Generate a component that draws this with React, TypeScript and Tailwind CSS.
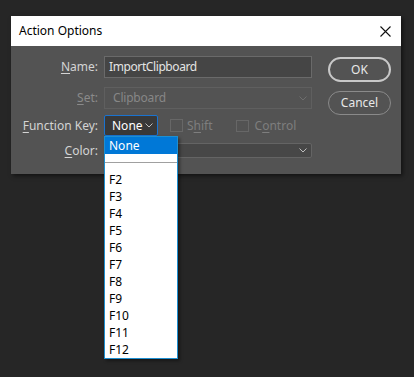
import React from "react";

const font = { fontFamily: '"Noto Sans", "Open Sans", sans-serif' };

const Chevron: React.FC<{ color: string }> = ({ color }) => (
  <svg width="8" height="5" viewBox="0 0 8 5" fill="none">
    <path d="M0.5 0.5 L4 4 L7.5 0.5" stroke={color} strokeWidth="1" />
  </svg>
);

const Label: React.FC<{ u: string; rest: string; disabled?: boolean }> = ({
  u,
  rest,
  disabled,
}) => (
  <div
    className={`w-[87px] shrink-0 text-right text-[12px] leading-none ${
      disabled ? "text-[#8a8a8a]" : "text-[#d4d4d4]"
    }`}
  >
    <span className="underline underline-offset-2">{u}</span>
    {rest}
  </div>
);

const keys = ["F2", "F3", "F4", "F5", "F6", "F7", "F8", "F9", "F10", "F11", "F12"];

const App: React.FC = () => {
  return (
    <div className="w-[414px] h-[377px] bg-[#262626] overflow-hidden pt-[16px] pl-[11px]" style={font}>
      <div className="relative w-[390px] shadow-[2px_2px_4px_rgba(0,0,0,0.5)]">
        {/* title bar */}
        <div className="h-[30px] bg-white flex items-center justify-between pl-[8px] pr-[10px]">
          <span className="text-[12px] text-black">Action Options</span>
          <svg width="11" height="11" viewBox="0 0 11 11">
            <path d="M0.5 0.5 L10.5 10.5 M10.5 0.5 L0.5 10.5" stroke="#111" strokeWidth="1.1" />
          </svg>
        </div>

        {/* body */}
        <div className="h-[128px] bg-[#535353] flex pt-[10px] pr-[10px]">
          <div className="flex flex-col w-[301px]">
            {/* Name */}
            <div className="flex items-center h-[22px]">
              <Label u="N" rest="ame:" />
              <div className="ml-[6px] w-[208px] h-[22px] bg-[#454545] border border-[#6a6a6a] flex items-center pl-[4px] text-[12px] tracking-[-0.4px] text-[#e4e4e4]">
                ImportClipboard
              </div>
            </div>
            {/* Set */}
            <div className="flex items-center h-[22px] mt-[9px]">
              <Label u="S" rest="et:" disabled />
              <div className="ml-[6px] w-[208px] h-[22px] border border-[#5f5f5f] flex items-center justify-between pl-[8px] pr-[4px] text-[12px] tracking-[-0.2px] text-[#878787]">
                <span>Clipboard</span>
                <Chevron color="#6e6e6e" />
              </div>
            </div>
            {/* Function Key */}
            <div className="flex items-center h-[21px] mt-[6px]">
              <Label u="F" rest="unction Key:" />
              <div className="ml-[6px] w-[54px] h-[21px] bg-[#393939] border border-[#1a73d0] rounded-[2px] flex items-center justify-between pl-[7px] pr-[4px] text-[12px] text-white">
                <span>None</span>
                <Chevron color="#bdbdbd" />
              </div>
              <div className="ml-[12px] w-[13px] h-[13px] border border-[#676767]" />
              <span className="ml-[4px] text-[12px] text-[#7e7e7e]">
                S<span className="underline underline-offset-2">h</span>ift
              </span>
              <div className="ml-[23px] w-[13px] h-[12px] border border-[#676767]" />
              <span className="ml-[6px] text-[12px] text-[#7e7e7e]">
                C<span className="underline underline-offset-2">o</span>ntrol
              </span>
            </div>
            {/* Color */}
            <div className="flex items-center h-[15px] mt-[7px]">
              <Label u="C" rest="olor:" />
              <div className="ml-[6px] w-[208px] h-[15px] bg-[#474747] border border-[#646464] rounded-[2px] flex items-center justify-end pr-[4px]">
                <Chevron color="#bdbdbd" />
              </div>
            </div>
          </div>

          <div className="ml-[16px] flex flex-col pt-[1px]">
            <div className="w-[63px] h-[25px] rounded-full border-2 border-[#c8c8c8] flex items-center justify-center text-[12px] text-[#e8e8e8]">
              OK
            </div>
            <div className="mt-[9px] w-[63px] h-[24px] rounded-full border border-[#8a8a8a] flex items-center justify-center text-[12px] text-[#e8e8e8]">
              Cancel
            </div>
          </div>
        </div>

        {/* open dropdown list */}
        <div className="absolute left-[93px] top-[120px] w-[74px] bg-white border border-[#1d8fd1] shadow-[2px_2px_3px_rgba(0,0,0,0.4)]">
          <div className="h-[17px] bg-[#0078d7] text-white text-[12px] leading-[17px] pl-[4px]">None</div>
          <div className="h-[17px] flex flex-col">
            <div className="h-[8px]" />
            <div className="h-[1px] bg-[#a0a0a0]" />
          </div>
          {keys.map((k) => (
            <div key={k} className="h-[17px] text-black text-[12px] leading-[17px] pl-[4px]">
              {k}
            </div>
          ))}
        </div>
      </div>
    </div>
  );
};

export default App;
